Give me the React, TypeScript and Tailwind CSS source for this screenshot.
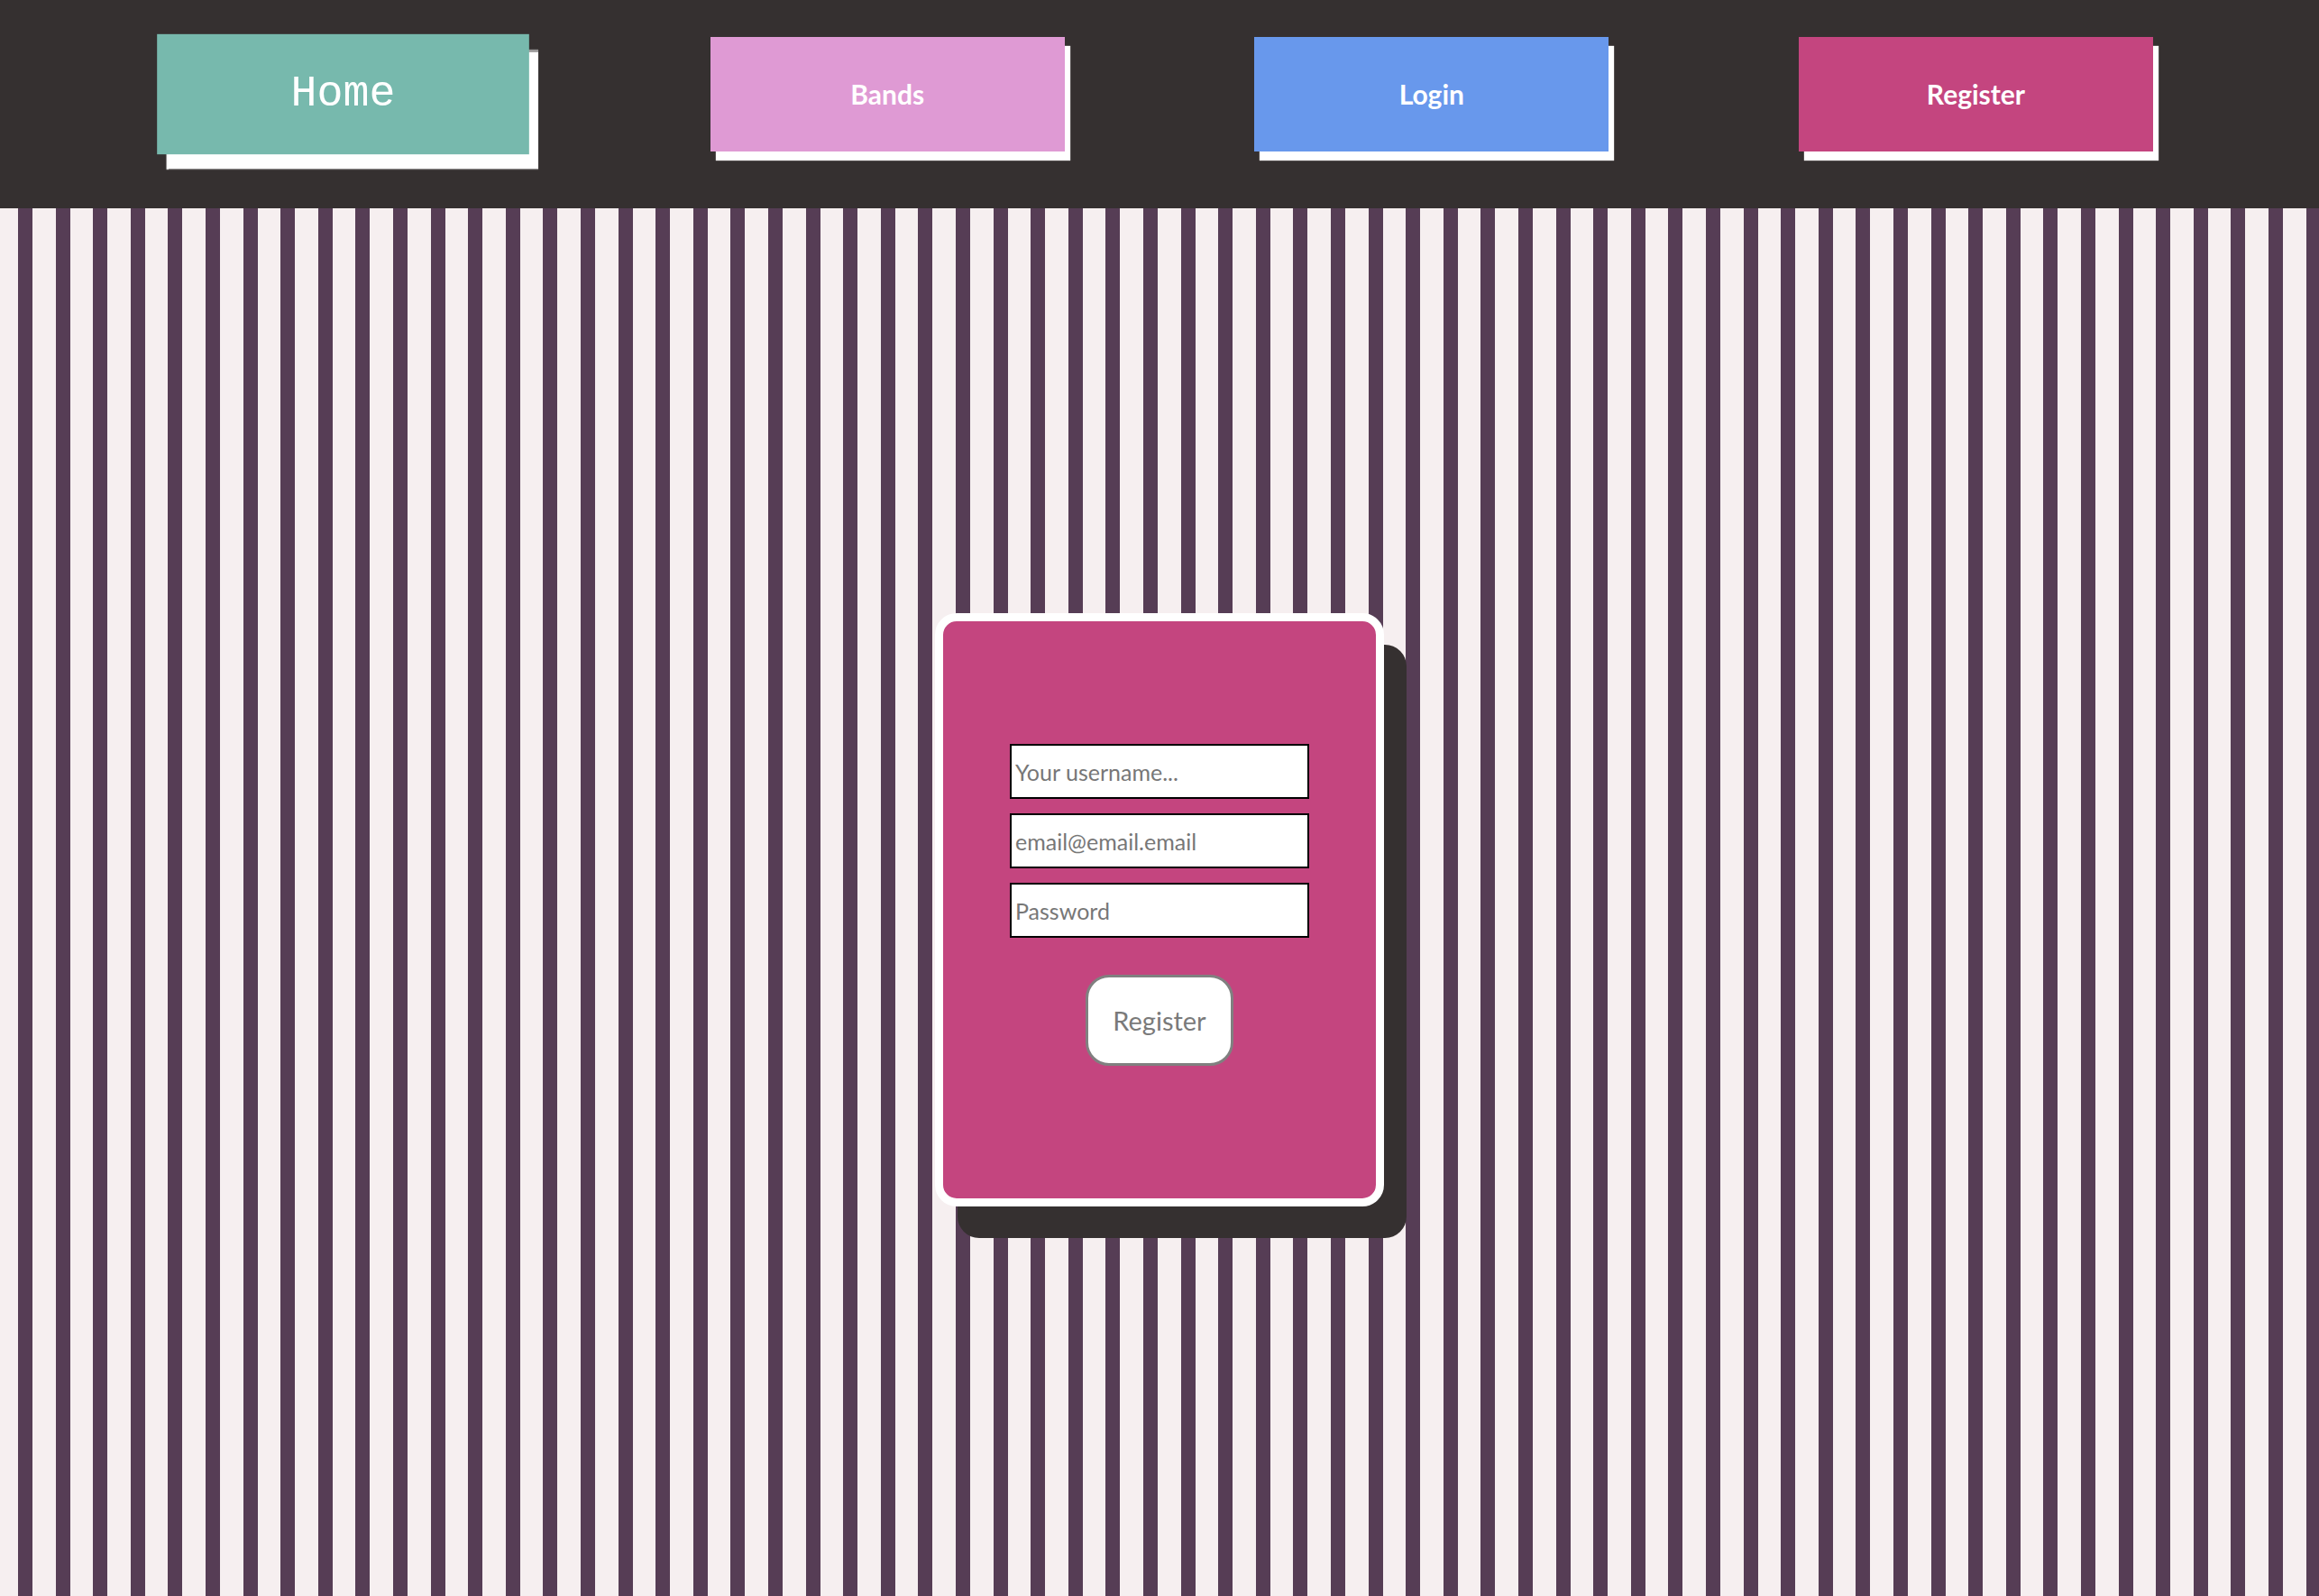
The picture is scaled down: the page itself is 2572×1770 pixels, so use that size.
import React from 'react';

const navItems = [
  { label: 'Bands', bg: 'bg-[#df9ad4]' },
  { label: 'Login', bg: 'bg-[#6898ec]' },
  { label: 'Register', bg: 'bg-[#c4457f]' },
];

const inputStyle =
  "block w-[332px] h-[61px] border-2 border-black bg-white px-[4px] text-[25px] text-[#777] placeholder:text-[#777] outline-none";

const App: React.FC = () => {
  return (
    <div
      className="min-h-screen bg-[repeating-linear-gradient(90deg,#f6eff0_0px,#f6eff0_20px,#563d55_20px,#563d55_36px,#f6eff0_36px,#f6eff0_41.6px)]"
      style={{ fontFamily: 'Lato, "Open Sans", sans-serif' }}
    >
      <nav className="h-[231px] bg-[#353030] flex items-start justify-between px-[184px] pt-[41px]">
        <a
          href="#"
          className="w-[393px] h-[127px] flex items-center justify-center bg-[#77b9ad] text-white text-[46px] scale-105 shadow-[10px_16px_1px_#fff] font-['Liberation_Mono',monospace]"
        >
          Home
        </a>
        {navItems.map((item) => (
          <a
            key={item.label}
            href="#"
            className={`w-[393px] h-[127px] flex items-center justify-center ${item.bg} text-white text-[30px] font-bold shadow-[6px_10px_1px_#fff]`}
          >
            {item.label}
          </a>
        ))}
      </nav>

      <div className="flex justify-center pt-[449px] pb-[200px]">
        <div className="w-[498px] h-[658px] rounded-[24px] border-[9px] border-white bg-[#c4457f] shadow-[25px_35px_0_#353030]">
          <form className="flex flex-col items-center pt-[136px]">
            <div className="flex flex-col gap-[16px]">
              <input type="text" placeholder="Your username..." className={inputStyle} />
              <input type="email" placeholder="email@email.email" className={inputStyle} />
              <input type="password" placeholder="Password" className={inputStyle} />
            </div>
            <button
              type="submit"
              className="mt-[41px] w-[164px] h-[101px] rounded-[26px] border-[3px] border-[#808080] bg-white text-[29px] text-[#7a7a7a]"
            >
              Register
            </button>
          </form>
        </div>
      </div>
    </div>
  );
};

export default App;
